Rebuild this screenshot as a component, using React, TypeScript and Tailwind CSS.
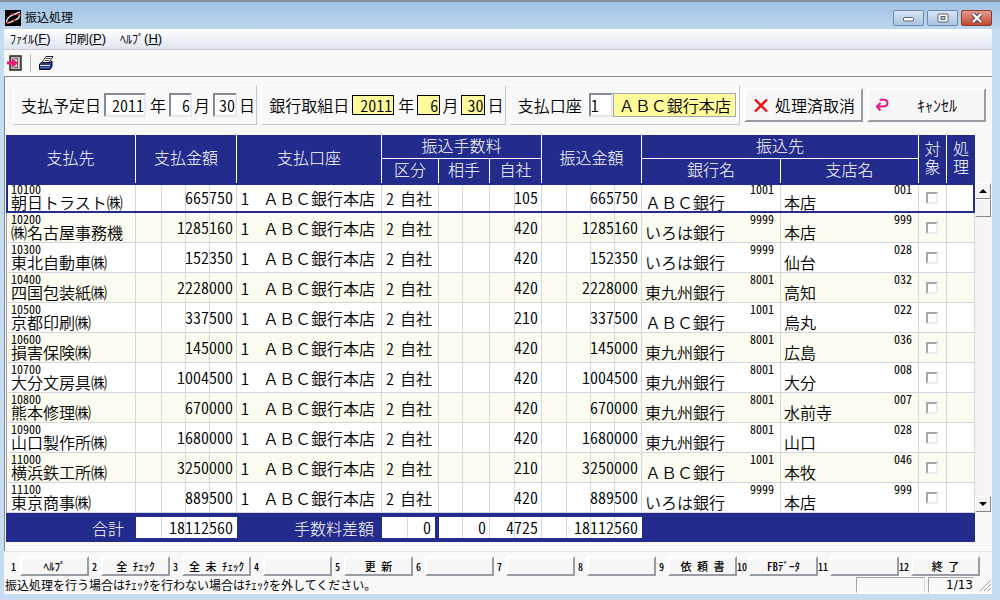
import { useState } from "react";
import type { ReactNode } from "react";
import { clsx } from "clsx";

const rows = [
  { code: "10100", name: "朝日トラスト㈱", amount: 665750, fee: 105, bankCode: "1001", bank: "ＡＢＣ銀行", branchCode: "001", branch: "本店" },
  { code: "10200", name: "㈱名古屋事務機", amount: 1285160, fee: 420, bankCode: "9999", bank: "いろは銀行", branchCode: "999", branch: "本店" },
  { code: "10300", name: "東北自動車㈱", amount: 152350, fee: 420, bankCode: "9999", bank: "いろは銀行", branchCode: "028", branch: "仙台" },
  { code: "10400", name: "四国包装紙㈱", amount: 2228000, fee: 420, bankCode: "8001", bank: "東九州銀行", branchCode: "032", branch: "高知" },
  { code: "10500", name: "京都印刷㈱", amount: 337500, fee: 210, bankCode: "1001", bank: "ＡＢＣ銀行", branchCode: "022", branch: "烏丸" },
  { code: "10600", name: "損害保険㈱", amount: 145000, fee: 420, bankCode: "8001", bank: "東九州銀行", branchCode: "036", branch: "広島" },
  { code: "10700", name: "大分文房具㈱", amount: 1004500, fee: 420, bankCode: "8001", bank: "東九州銀行", branchCode: "008", branch: "大分" },
  { code: "10800", name: "熊本修理㈱", amount: 670000, fee: 420, bankCode: "8001", bank: "東九州銀行", branchCode: "007", branch: "水前寺" },
  { code: "10900", name: "山口製作所㈱", amount: 1680000, fee: 420, bankCode: "8001", bank: "東九州銀行", branchCode: "028", branch: "山口" },
  { code: "11000", name: "横浜鉄工所㈱", amount: 3250000, fee: 210, bankCode: "1001", bank: "ＡＢＣ銀行", branchCode: "046", branch: "本牧" },
  { code: "11100", name: "東京商事㈱", amount: 889500, fee: 420, bankCode: "9999", bank: "いろは銀行", branchCode: "999", branch: "本店" },
];

// Totals cover all 13 records, not only the visible ones
const totals = { amount: 18112560, payerFee: 0, payeeFee: 0, ownFee: 4725 };

const functionKeys = ["ﾍﾙﾌﾟ", "全 ﾁｪｯｸ", "全 未 ﾁｪｯｸ", "", "更 新", "", "", "", "依 頼 書", "FBﾃﾞｰﾀ", "", "終 了"];

const raised =
  "border-2 border-t-white border-l-white border-r-[#9a9ca3] border-b-[#9a9ca3] bg-[#f6f6f7] active:border-t-[#9a9ca3] active:border-l-[#9a9ca3]";
const sunkenInput =
  "h-6 border-2 border-t-[#858992] border-l-[#858992] border-r-[#e8e8ea] border-b-[#e8e8ea] bg-white outline-none";
const yellowInput = "h-5 border border-black bg-[#fffa9b] pr-px outline-none";
const th = "border-r border-white p-0 pb-1 text-center font-light";
const td = "h-[30px] border-r border-b border-[#d3d6de] p-0";
const fullWidth = "[font-feature-settings:normal]";

// Ledger style figure with a rule between every three digits
function Figures({ children, className = "leading-7" }: { children?: ReactNode; className?: string }) {
  return (
    <div
      className={clsx(
        "mr-[3px] ml-[2px] h-full bg-[repeating-linear-gradient(to_left,transparent_0_23px,#d6d8df_23px_24px)] text-right",
        className,
      )}
    >
      {children}
    </div>
  );
}

function CodeAndName({ code, name, right }: { code: string; name: string; right?: boolean }) {
  return (
    <div className={clsx("pb-[2px] whitespace-nowrap", right ? "pl-[3px]" : "pl-1")}>
      <div className={clsx("text-xs leading-[10px] font-normal", right && "pr-[6px] text-right")}>{code}</div>
      <div className={clsx("leading-4", fullWidth)}>{name}</div>
    </div>
  );
}

function FilterGroup({ title, children }: { title: string; children: ReactNode }) {
  return (
    <div
      role="group"
      aria-label={title}
      className="flex h-10 grow items-center gap-[3px] border border-t-white border-l-white border-r-[#c3c6cd] border-b-[#c3c6cd] pl-[7px] whitespace-nowrap"
    >
      {children}
    </div>
  );
}

function DateFields({ title, inputClass }: { title: string; inputClass: string }) {
  return (
    <FilterGroup title={title}>
      <span>{title}</span>
      <label className="flex items-center gap-1">
        <input className={clsx(inputClass, "w-[42px] text-right")} defaultValue="2011" />年
      </label>
      <label className="flex items-center gap-[2px]">
        <input className={clsx(inputClass, "w-[23px] text-right")} defaultValue="6" />月
      </label>
      <label className="flex items-center gap-[2px]">
        <input className={clsx(inputClass, "w-6 text-right")} defaultValue="30" />日
      </label>
    </FilterGroup>
  );
}

function TitleBar() {
  const button = "flex h-4 w-[31px] items-center justify-center rounded-xs border border-[#7189a8] bg-linear-to-b from-[#d7e5f5] to-[#a9c4e2]";
  return (
    <header className="flex h-[29px] items-center border-t-2 border-[#85909d] bg-linear-to-b from-[#a1c2e3] to-[#bcd6ef] pr-2 pl-[5px] text-xs font-normal">
      <svg width="16" height="16" viewBox="0 0 16 16" className="mt-1">
        <rect width="16" height="16" fill="#000" />
        <path d="M1.500 12C2 8 6 5 10 4l5-2M2 13c4 0 5-2 8-3s5-3 4.500-6" fill="none" stroke="#e4e4e4" strokeWidth="1.500" />
        <path d="M5.500 4h3M1 13h2.500" stroke="#e8141c" strokeWidth="1.600" />
        <circle cx="13.500" cy="4.500" r="1.200" fill="#e8141c" />
        <circle cx="9.500" cy="10.500" r="1.200" fill="#e8141c" />
      </svg>
      <h1 className="mt-[2px] ml-1 grow">振込処理</h1>
      <div className="mt-[5px] flex gap-[3px]">
        <button type="button" aria-label="最小化" className={button}>
          <svg width="13" height="8" viewBox="0 0 13 8"><rect x="1.500" y="3.500" width="10" height="3.500" rx="1" fill="#fff" stroke="#5a626e" /></svg>
        </button>
        <button type="button" aria-label="最大化" className={button}>
          <svg width="12" height="10" viewBox="0 0 12 10">
            <rect x="1" y="1" width="10" height="8" rx="1" fill="#fff" stroke="#5a626e" />
            <rect x="4" y="3.500" width="4" height="3" fill="#a9c4e2" stroke="#5a626e" />
          </svg>
        </button>
        <button type="button" aria-label="閉じる" className="flex h-4 w-[31px] items-center justify-center rounded-xs border border-[#8d3c31] bg-linear-to-b from-[#e29a8b] to-[#c2452f]">
          <svg width="12" height="10" viewBox="0 0 12 10">
            <path d="M2 1l8 8M10 1l-8 8" stroke="#5b4a50" strokeWidth="4.500" />
            <path d="M2 1l8 8M10 1l-8 8" stroke="#fff" strokeWidth="2.400" />
          </svg>
        </button>
      </div>
    </header>
  );
}

function MenuBar() {
  const items = [["ﾌｧｲﾙ", "F"], ["印刷", "P"], ["ﾍﾙﾌﾟ", "H"]];
  return (
    <nav className="flex h-[21px] items-center gap-[14px] border-b border-[#c9ccd2] bg-linear-to-b from-white via-[#eef1f7] to-[#dfe4ef] pl-[6px] text-xs font-normal">
      {items.map(([label, key]) => (
        <button type="button" key={key} className="flex items-center">
          {label}
          <span className="font-['Liberation_Sans','Arial',sans-serif] text-[13px] font-normal">
            (<u>{key}</u>)
          </span>
        </button>
      ))}
    </nav>
  );
}

function Toolbar() {
  return (
    <div className="flex h-[26px] items-center bg-[#f8f8f8] pl-[2px]">
      <button type="button" aria-label="終了">
        <svg width="16" height="16" viewBox="0 0 16 16">
          <path d="M4 1h11v14H4z" fill="#b5b5b5" stroke="#222" strokeWidth="1.400" />
          <path d="M6 3h7v10H6z" fill="#d9d9d9" />
          <path d="M11.500 3v10M8 3.500h3M8 12.500h3" stroke="#666" />
          <path d="M1 6.500h5V3l6 5-6 5V9.500H1z" fill="#f0187a" />
        </svg>
      </button>
      <span className="ml-2 mr-[7px] h-[18px] w-px bg-[#b9bbc0]" />
      <button type="button" aria-label="印刷">
        <svg width="16" height="16" viewBox="0 0 16 16">
          <path d="M4 7.500l4-6h7l-4 6z" fill="#fff" stroke="#222" />
          <path d="M8 3.500h4.500M7 5.500h4" stroke="#444" />
          <path d="M1.500 9l2-1.500h8.500l2-1.500v5.500l-2 3H1.500z" fill="#2b3a86" stroke="#0a0a1c" />
          <path d="M2 10.500h10" stroke="#dfe4fa" />
          <path d="M2 12.500h10" stroke="#5265c0" />
        </svg>
      </button>
    </div>
  );
}

function Filters() {
  return (
    <form className="flex items-center gap-1 pr-[6px] pl-2 font-[350]" onSubmit={(e) => e.preventDefault()}>
      <DateFields title="支払予定日" inputClass={sunkenInput} />
      <DateFields title="銀行取組日" inputClass={yellowInput} />
      <FilterGroup title="支払口座">
        <label htmlFor="account">支払口座</label>
        <div className="ml-1 flex grow items-center">
          <input id="account" className={clsx(sunkenInput, "w-6")} defaultValue="1" />
          <input
            aria-label="支払口座名"
            readOnly
            className={clsx("mr-[3px] h-6 w-[122px] grow border border-[#a3a9b5] bg-[#fffa9b] pl-[5px] outline-none", fullWidth)}
            value="ＡＢＣ銀行本店"
          />
        </div>
      </FilterGroup>
      <button type="button" className={clsx(raised, "flex h-[34px] w-[119px] shrink-0 items-center pl-[7px] whitespace-nowrap")}>
        <svg width="16" height="16" viewBox="0 0 16 16">
          <path d="M2 2.500l12 12M14 2.500l-12 12" stroke="#ee1015" strokeWidth="2.400" />
        </svg>
        <span className="ml-[6px]">処理済取消</span>
      </button>
      <button type="button" className={clsx(raised, "flex h-[34px] w-[119px] shrink-0 items-center pl-[5px]")}>
        <svg width="16" height="16" viewBox="0 0 16 16">
          <path d="M6 3.500C8 2 13.500 2 13.500 6c0 3-3 3.500-5 3.500H3" fill="none" stroke="#e5188a" strokeWidth="2" />
          <path d="M6.500 6L3 9.500 6.500 13.500" fill="none" stroke="#e5188a" strokeWidth="2" />
        </svg>
        <span className="grow text-center">ｷｬﾝｾﾙ</span>
      </button>
    </form>
  );
}

function ScrollBar() {
  const arrow = "flex h-4 shrink-0 items-center justify-center border border-t-white border-l-white border-r-[#85888f] border-b-[#85888f] bg-[#f3f3f4]";
  return (
    <div className="mt-12 mb-[30px] flex w-4 shrink-0 flex-col bg-[#f7f4f5]">
      <button type="button" aria-label="上へ" className={arrow}>
        <svg width="8" height="4" viewBox="0 0 8 4"><path d="M0 4l4-4 4 4z" /></svg>
      </button>
      <div className="h-[18px] border border-t-white border-l-white border-r-[#85888f] border-b-[#85888f] bg-[#f3f3f4]" />
      <div className="grow" />
      <button type="button" aria-label="下へ" className={arrow}>
        <svg width="8" height="4" viewBox="0 0 8 4"><path d="M0 0l4 4 4-4z" /></svg>
      </button>
    </div>
  );
}

function TotalBox({ value, ruled }: { value: number; ruled?: boolean }) {
  return (
    <div className={clsx("h-[21px] border-r bg-white", ruled ? "border-[#d3d6de]" : "border-white")}>
      <Figures className="leading-5">{value}</Figures>
    </div>
  );
}

function TransferTable() {
  const [checked, setChecked] = useState<string[]>([]);
  const toggle = (code: string) =>
    setChecked((list) => (list.includes(code) ? list.filter((c) => c !== code) : [...list, code]));

  return (
    <table className="w-full table-fixed border-separate border-spacing-0 bg-white">
      <colgroup>
        <col className="w-[130px]" />
        <col className="w-[101px]" />
        <col className="w-[145px]" />
        <col className="w-[57px]" />
        <col className="w-[51px]" />
        <col className="w-[52px]" />
        <col className="w-[100px]" />
        <col className="w-[139px]" />
        <col className="w-[138px]" />
        <col className="w-[28px]" />
        <col className="w-[28px]" />
      </colgroup>
      <thead className="bg-[#232c8c] leading-[18px] text-white">
        <tr className="h-6">
          <th rowSpan={2} className={th}>支払先</th>
          <th rowSpan={2} className={th}>支払金額</th>
          <th rowSpan={2} className={th}>支払口座</th>
          <th colSpan={3} className={clsx(th, "border-b")}>振込手数料</th>
          <th rowSpan={2} className={th}>振込金額</th>
          <th colSpan={2} className={clsx(th, "border-b")}>振込先</th>
          <th rowSpan={2} className={th}>対<br />象</th>
          <th rowSpan={2} className="p-0 pb-1 text-center font-light">処<br />理</th>
        </tr>
        <tr className="h-6">
          <th className={th}>区分</th>
          <th className={th}>相手</th>
          <th className={th}>自社</th>
          <th className={th}>銀行名</th>
          <th className={th}>支店名</th>
        </tr>
      </thead>
      <tbody className="font-[350]">
        {rows.map((r, i) => (
          <tr
            key={r.code}
            className={clsx(
              "h-[30px]",
              i % 2 === 1 && "bg-[#fbfbef]",
              i === 0 && "outline-2 -outline-offset-2 outline-[#232c8c]",
            )}
          >
            <td className={clsx(td, "border-l border-l-[#9a9ca3]")}><CodeAndName code={r.code} name={r.name} /></td>
            <td className={td}><Figures>{r.amount}</Figures></td>
            <td className={td}>
              <div className="flex gap-[14px] pl-1 leading-7 whitespace-nowrap">
                <span>1</span>
                <span className={fullWidth}>ＡＢＣ銀行本店</span>
              </div>
            </td>
            <td className={td}>
              <div className="flex gap-[6px] pl-1 leading-7 whitespace-nowrap"><span>2</span><span>自社</span></div>
            </td>
            <td className={td}><Figures className="min-h-7" /></td>
            <td className={td}><Figures>{r.fee}</Figures></td>
            <td className={td}><Figures>{r.amount}</Figures></td>
            <td className={td}><CodeAndName code={r.bankCode} name={r.bank} right /></td>
            <td className={td}><CodeAndName code={r.branchCode} name={r.branch} right /></td>
            <td className={td}>
              <input
                type="checkbox"
                aria-label={`${r.name} 対象`}
                checked={checked.includes(r.code)}
                onChange={() => toggle(r.code)}
                className="ml-[7px] block size-3 appearance-none border-2 border-t-[#a5a7ad] border-r-[#eeeef0] border-b-[#eeeef0] border-l-[#a5a7ad] bg-white checked:bg-[#232c8c]"
              />
            </td>
            <td className={td} />
          </tr>
        ))}
      </tbody>
      <tfoot className="bg-[#232c8c] leading-5 font-[350]">
        <tr className="h-[29px]">
          <th className="p-0 pr-3 text-right font-light text-white">合計</th>
          <td className="p-0"><TotalBox value={totals.amount} /></td>
          <th className="p-0 pr-2 text-right font-light text-white">手数料差額</th>
          <td className="p-0 pr-1"><TotalBox value={totals.payerFee} /></td>
          <td className="p-0"><TotalBox value={totals.payeeFee} ruled /></td>
          <td className="p-0"><TotalBox value={totals.ownFee} ruled /></td>
          <td className="p-0"><TotalBox value={totals.amount} /></td>
          <td colSpan={4} />
        </tr>
      </tfoot>
    </table>
  );
}

function Footer() {
  return (
    <footer className="border-t border-[#e2e4e9] bg-[#f8f8f8]">
      <div className="grid grid-cols-12 pt-1 pr-3 pl-1">
        {functionKeys.map((label, i) => (
          <div key={i} className="flex h-5 items-center">
            <span className={clsx("w-3 shrink-0 text-[10px] font-medium", i < 9 && "pl-[3px]")}>{i + 1}</span>
            <button
              type="button"
              aria-label={label || `F${i + 1}`}
              className={clsx(raised, "h-5 grow text-[11px] leading-[14px] font-medium")}
            >
              {label}
            </button>
          </div>
        ))}
      </div>
      <div className="flex h-[18px] items-center pl-[1px] text-xs font-normal">
        <p className="grow">振込処理を行う場合はﾁｪｯｸを行わない場合はﾁｪｯｸを外してください。</p>
        <div className="mr-[3px] h-4 w-[69px] border border-t-[#a3a6ad] border-r-[#dcdde0] border-b-white border-l-[#a3a6ad]" />
        <div className="h-4 w-[46px] border border-t-[#a3a6ad] border-r-white border-b-white border-l-[#a3a6ad] text-right font-['DejaVu_Sans',sans-serif] leading-[14px]">
          1/13
        </div>
        <svg width="12" height="12" viewBox="0 0 12 12" className="mr-[1px] ml-[5px]">
          <path d="M1 12L12 1M5 12l7-7M9 12l3-3" stroke="#9da0a6" />
        </svg>
      </div>
    </footer>
  );
}

export default function App() {
  return (
    <div className="flex min-h-screen flex-col bg-[#c5dcf1] font-['Noto_Sans_CJK_JP',sans-serif] text-base font-light text-black [font-feature-settings:'hwid']">
      <TitleBar />
      <div className="mr-2 mb-[6px] ml-1 flex grow flex-col bg-[#f8f8f8]">
        <MenuBar />
        <Toolbar />
        <main className="grow border-t border-l border-[#868a90] pt-2 pb-[9px]">
          <Filters />
          <div className="mt-[10px] flex pr-px pl-px">
            <TransferTable />
            <ScrollBar />
          </div>
        </main>
        <Footer />
      </div>
    </div>
  );
}
